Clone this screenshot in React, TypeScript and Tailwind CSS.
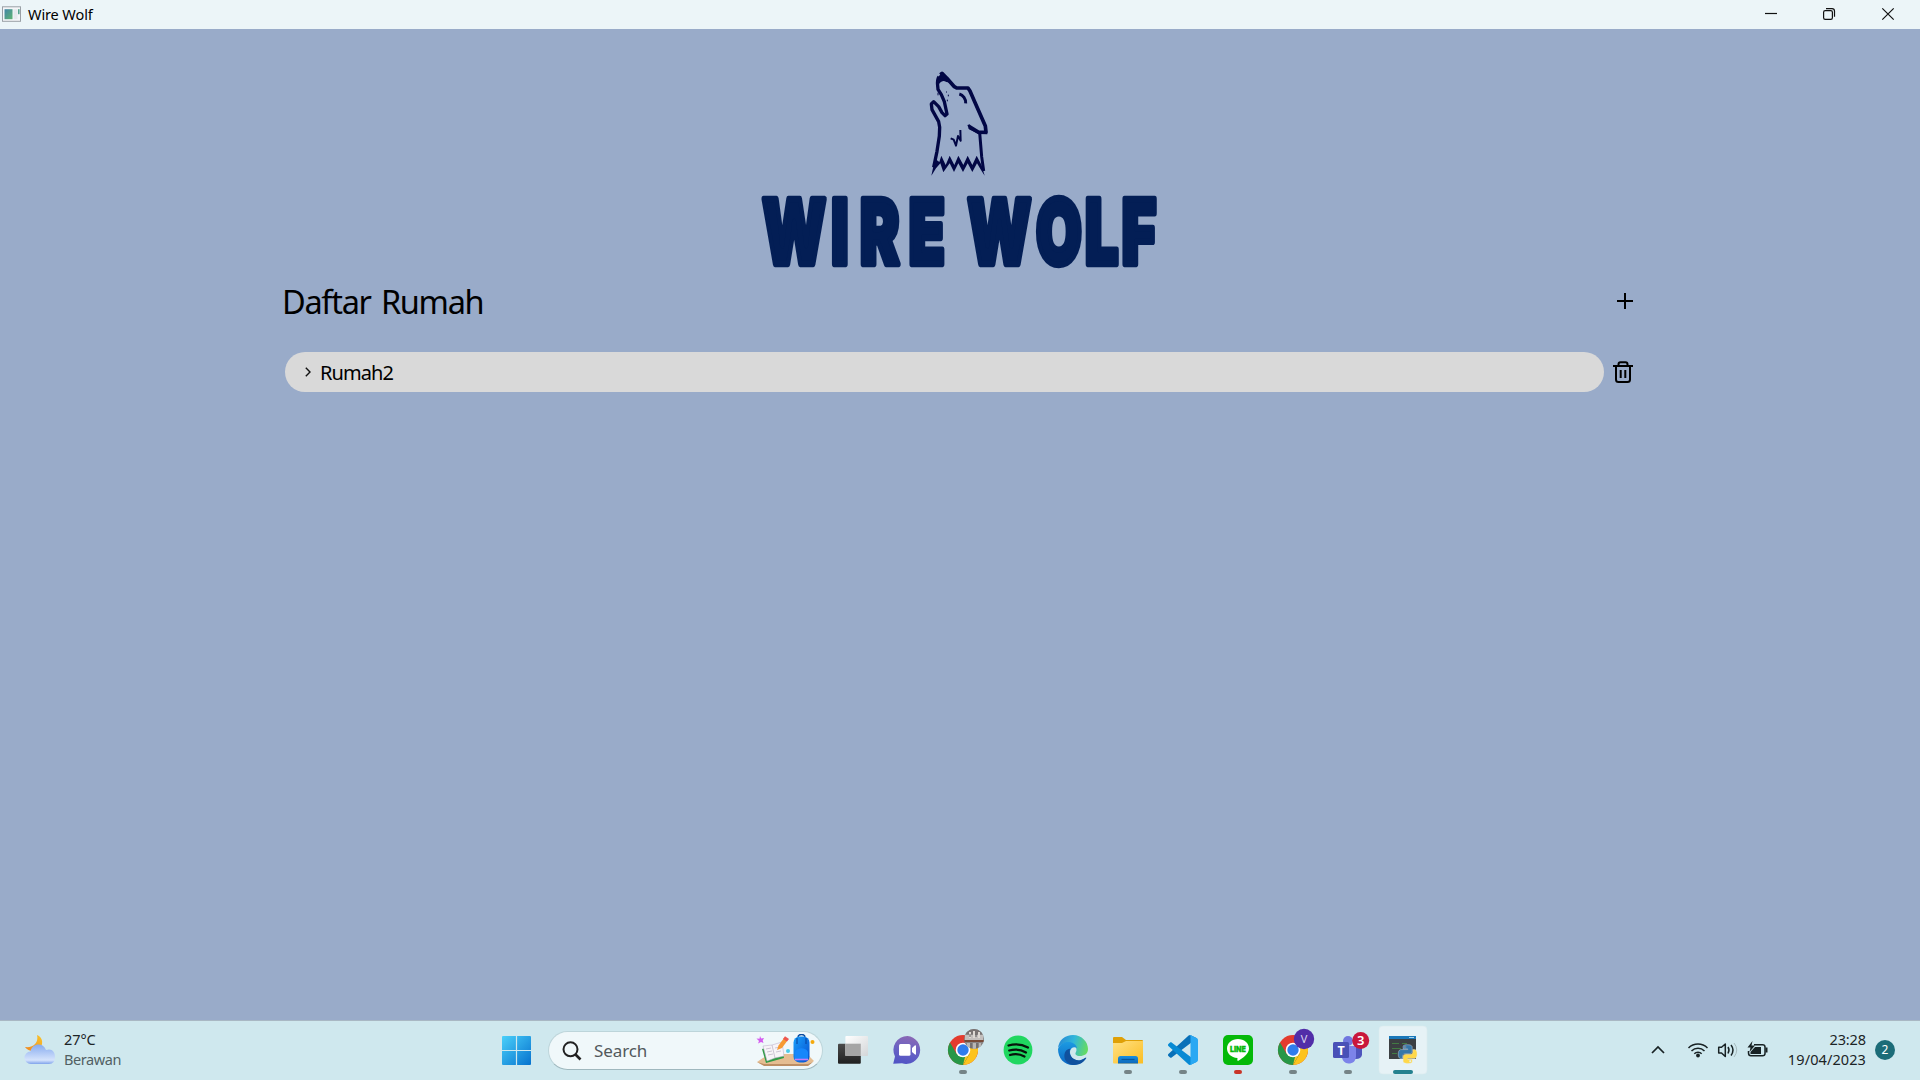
import type { ReactNode } from "react";

const PYTHON_HALF =
  "M14.25.18l.9.2.73.26.59.3.45.32.34.34.25.34.16.33.1.3.04.26.02.2-.01.13V8.5l-.05.63-.13.55-.21.46-.26.38-.3.31-.33.25-.35.19-.35.14-.33.1-.3.07-.26.04-.21.02H8.77l-.69.05-.59.14-.5.22-.41.27-.33.32-.27.35-.2.36-.15.37-.1.35-.07.32-.04.27-.02.21v3.06H3.17l-.21-.03-.28-.07-.32-.12-.35-.18-.36-.26-.36-.36-.35-.46-.32-.59-.28-.73-.21-.88-.14-1.05-.05-1.23.06-1.22.16-1.04.24-.87.32-.71.36-.57.4-.44.42-.33.42-.24.4-.16.36-.1.32-.05.24-.01h.16l.06.01h8.16v-.83H6.18l-.01-2.75-.02-.37.05-.34.11-.31.17-.28.25-.26.31-.23.38-.2.44-.18.51-.15.58-.12.64-.1.71-.06.77-.04.84-.02 1.27.05zm-6.3 1.98l-.23.33-.08.41.08.41.23.34.33.22.41.09.41-.09.33-.22.23-.34.08-.41-.08-.41-.23-.33-.33-.22-.41-.09-.41.09z";

function TitleBar() {
  return (
    <header className="flex h-[29px] shrink-0 items-center justify-between bg-[#ecf5f8]">
      <div className="flex items-center">
        <svg className="ml-[2px] -mt-[2px] h-[16px] w-[19px]" viewBox="0 0 19 16">
          <defs>
            <linearGradient id="app" x1="0" y1="0" x2="1" y2="1">
              <stop offset="0" stopColor="#4286a8" />
              <stop offset="1" stopColor="#5fb471" />
            </linearGradient>
          </defs>
          <rect x=".5" y=".8" width="18" height="14.5" fill="#f4f6f8" stroke="#9aa0a6" />
          <rect x="2.5" y="3.2" width="8" height="10" fill="url(#app)" />
          <rect x="11.5" y="3.2" width="4" height="10" fill="#e6e9ed" />
          <rect x="16" y="3.2" width="1.6" height="5" fill="#58a590" />
        </svg>
        <span className="ml-[7px] text-[14.5px] leading-[29px] tracking-[-0.1px] text-black">Wire Wolf</span>
      </div>
      <svg className="mr-[20px] h-[29px] w-[140px]" viewBox="0 0 140 29" fill="none" stroke="#111" strokeWidth="1.2">
        <path d="M5 13.5H17" />
        <rect x="63.6" y="10.6" width="8.8" height="8.8" rx="1.6" />
        <path d="M66 8.6h6a2.5 2.5 0 0 1 2.5 2.5v5.7" />
        <path d="M122.3 8.3 133.7 19.7M133.7 8.3 122.3 19.7" />
      </svg>
    </header>
  );
}

function Logo() {
  return (
    <div className="flex flex-col items-center pt-[31px]">
      <svg className="h-[130px] w-[120px]" viewBox="0 0 360 390" fill="none" stroke="#020745" strokeLinejoin="round">
        <path d="M121 44 126 40 140 54 163 80 170 84 204 84 210 93 224 125 256 198 258 216 236 217 208 200" strokeWidth="11" />
        <path d="M239 218 245 290 251 333" strokeWidth="9" />
        <path d="M117 50C109 62 113 72 114 88L124 104 133 125 141 162 135 167 126 158 116 140 101 125 94 132 96 149 116 185 119 202 118 228 111 274 101 322" strokeWidth="10" />
        <path d="M125 36 145 56 153 68 139 66C128 58 119 66 114 78L109 68 116 50Z" fill="#020745" stroke="none" />
        <path d="M94 347 105 296 118 306 124 287 137 315 149 287 163 315 175 287 190 315 203 287 217 315 230 287 245 316 254 347 243 330 231 310 217 336 203 310 189 336 175 310 162 336 149 310 130 337 121 310 108 325Z" fill="#020745" stroke="none" />
        <path d="M178 102C189 105 198 116 197 130" strokeWidth="9" />
        <path d="M206 194 210 205 236 218 262 219" strokeWidth="8" />
        <path d="M152 235 161 239 168 257 174 228 182 242 181 210" strokeWidth="6" />
        <path d="M138 96h3M145 104v5M142 119v5M114 98v8" strokeWidth="3" />
      </svg>
      <svg className="-mt-[20px] -mb-[20px] h-[130px] w-[440px]" viewBox="0 -30 1320 390">
        <g
          fill="#031e55"
          stroke="#031e55"
          strokeWidth="19"
          strokeLinejoin="round"
          fontFamily="Inter, sans-serif"
          fontWeight="900"
          fontSize="268"
          transform="scale(.66 1)"
        >
          <text x="101 415 546 767" y="252">WIRE</text>
          <text x="1034 1345 1568 1735" y="252">WOLF</text>
        </g>
      </svg>
    </div>
  );
}

function Cell({ children, mark }: { children: ReactNode; mark?: string }) {
  return (
    <svg className="h-[59px] w-[55px] shrink-0" viewBox="0 0 55 59">
      {children}
      {mark && <rect x="24" y="49" width="8" height="4" rx="2" fill={mark} />}
    </svg>
  );
}

function Chrome() {
  return (
    <g>
      <circle cx="28" cy="29" r="15" fill="#e33b2e" />
      <path d="M15 21.5 21.5 32.7 28 36.5 28 44A15 15 0 0 1 15 21.5Z" fill="#269746" />
      <path d="M28 44 34.5 32.7 34.5 22H41.3A15 15 0 0 1 28 44Z" fill="#fcc31e" />
      <path d="M21.5 32.7 28 44 34.6 32.7Z" fill="#269746" />
      <path d="M28 44 34.6 32.7 30 36Z" fill="#fcc31e" />
      <circle cx="28" cy="29" r="7.3" fill="#fff" />
      <circle cx="28" cy="29" r="5.7" fill="#2f7cec" />
    </g>
  );
}

function Start() {
  return (
    <svg className="h-[59px] w-[58px] shrink-0" viewBox="0 0 58 59">
      <defs>
        <linearGradient id="win" gradientUnits="userSpaceOnUse" x1="12" y1="15" x2="41" y2="44">
          <stop stopColor="#4ad0fa" />
          <stop offset="1" stopColor="#0672ce" />
        </linearGradient>
      </defs>
      <path fill="url(#win)" d="M13 15h12.9v13.9H12V16a1 1 0 0 1 1-1ZM27.1 15H40a1 1 0 0 1 1 1v12.9H27.1ZM12 30.1h13.9V44H13a1 1 0 0 1-1-1ZM27.1 30.1H41V43a1 1 0 0 1-1 1H27.1Z" />
    </svg>
  );
}

function Search() {
  return (
    <div className="flex h-[39px] w-[275px] items-center rounded-full border border-[#bdd5da] border-b-[#9fb8be] bg-[#f0f8fa]">
      <svg className="ml-[12px] h-[22px] w-[22px]" viewBox="0 0 22 22" fill="none" stroke="#222">
        <circle cx="9.5" cy="9.3" r="7" strokeWidth="2" />
        <path d="m14.5 14.5 5 5" strokeWidth="2.6" />
      </svg>
      <span className="ml-[11px] text-[17px] tracking-[-0.1px] text-[#52595c]">Search</span>
      <svg className="ml-auto mr-[6px] h-[33px] w-[61px]" viewBox="0 0 61 33">
        <defs>
          <linearGradient id="bag" x1="0" y1="0" x2="1" y2="1">
            <stop stopColor="#1aa0fb" />
            <stop offset="1" stopColor="#064fd0" />
          </linearGradient>
        </defs>
        <path d="M2 28 14 20H52L59 27 53 31.5H9Z" fill="#e5bd92" />
        <path d="M2 28 9 30H53L58 28 53 32H9Z" fill="#bd8e64" />
        <path d="M7 15 11 29 29 24 26 10Z" fill="#2f9b45" />
        <path d="M8 12 17 11 27 8 29 22 20 24 12 27Z" fill="#f7f4f8" stroke="#b5a8c4" strokeWidth=".5" />
        <path d="M17 11 20 24M11 15l5-1M12 18l5-1M13 21l5-1M20 14l5-1M21 18l5-1" stroke="#b0a6bc" strokeWidth=".6" fill="none" />
        <path d="m22 16 1.5-4.5L29 4l3.5 2.5L27 14Z" fill="#f79a32" />
        <path d="m28 5 2-2.7L34 5l-2 2.6Z" fill="#ee574f" />
        <path d="m5 2 1.2 2.5L9 4 7.7 6.5 8.5 9 6 8 3 9.5 4 7 1.5 4.5 4.5 4.8Z" fill="#d35cf0" />
        <path d="M43 3.5C43-.5 50-.5 50 3.5" fill="none" stroke="#0b4b9f" strokeWidth="1.5" />
        <rect x="38.5" y="2.5" width="16" height="26" rx="6" fill="url(#bag)" />
        <path d="M40 18C42 13 51 13 53 18V25H40Z" fill="#1687fb" />
        <path d="M40 25.5H53" stroke="#c57df8" strokeWidth="1.6" />
        <path d="M42 4v6M51 4v6" stroke="#07419c" strokeWidth="1" />
        <circle cx="33" cy="17" r="2" fill="#4bcbe8" />
        <circle cx="57.5" cy="8" r="2" fill="#f5a90c" />
      </svg>
    </div>
  );
}

function Apps() {
  return (
    <div className="ml-[2px] flex">
      <Cell>
        <defs>
          <linearGradient id="dark" x1="0" y1="0" x2="0" y2="1">
            <stop stopColor="#4a4a4a" />
            <stop offset="1" stopColor="#202020" />
          </linearGradient>
          <linearGradient id="light" x1="0" y1="0" x2="1" y2="1">
            <stop stopColor="#fff" />
            <stop offset="1" stopColor="#d3d6d8" />
          </linearGradient>
        </defs>
        <rect x="13" y="22.7" width="22.8" height="20" rx="1" fill="url(#dark)" />
        <rect x="20.4" y="15" width="22.6" height="20" rx="1" fill="url(#light)" />
        <path d="M20.4 22.7H35.8V35H20.4Z" fill="#a5a5a5" />
      </Cell>
      <Cell>
        <defs>
          <linearGradient id="chat" x1=".6" y1="0" x2=".4" y2="1">
            <stop stopColor="#8b68b4" />
            <stop offset=".5" stopColor="#6962c4" />
            <stop offset="1" stopColor="#5254c5" />
          </linearGradient>
        </defs>
        <path d="M27.5 15A14 14 0 1 1 22 42.3L13.2 42.8 15 35.5A14 14 0 0 1 27.5 15Z" fill="url(#chat)" />
        <rect x="19" y="23" width="11.5" height="11.7" rx="1.5" fill="#fff" />
        <path d="M32 27 35 24.2Q36 24 36 25V33Q36 34 35 33.5L32 31Z" fill="#fff" />
      </Cell>
      <Cell mark="#758487">
        <Chrome />
        <clipPath id="avatar"><circle cx="39" cy="18" r="10" /></clipPath>
        <g clipPath="url(#avatar)">
          <path d="M29 8h20v20H29Z" fill="#898585" />
          <path d="M29 8h20v5H29Z" fill="#797372" />
          <path d="M30 14h18v5H30Z" fill="#c3bfbd" />
          <path d="M34 11h2v6h-2M38 10h2v7h-2M43 11h2v6h-2" fill="#ddd8d3" />
          <path d="M29 19h20v2H29Z" fill="#774b38" />
          <path d="M32 22h3v6h-3M38 22h3v6h-3M44 22h2v5h-2" fill="#b8b7b5" />
          <path d="M35 13v3M41 13v3M36 22v6M42 22v6" stroke="#5d5a5c" />
        </g>
      </Cell>
      <Cell>
        <circle cx="28" cy="29" r="14.4" fill="#20d760" />
        <path d="M18.5 24.5C25 22.5 32 23.2 38 26.5M19.2 29.5C25 27.8 31 28.5 36 31.5M20 34C25 32.5 30 33 34.5 35.5" fill="none" stroke="#07140b" strokeLinecap="round" strokeWidth="2.2" />
      </Cell>
      <Cell>
        <defs>
          <linearGradient id="edgeTop" x1="0" y1=".3" x2="1" y2=".5">
            <stop stopColor="#2689d6" />
            <stop offset=".5" stopColor="#31b6da" />
            <stop offset="1" stopColor="#65db62" />
          </linearGradient>
          <linearGradient id="edgeSide" x1="0" y1="0" x2="0" y2="1">
            <stop stopColor="#1c9ae2" />
            <stop offset="1" stopColor="#0b66c3" />
          </linearGradient>
        </defs>
        <path d="M13 27C14 19 20 14 28 14C37 14 43 21 43 28C43 33 39 35 35 35C31 35 29.5 33 31 31C33 27 29 22 23 22C18 22 15 24 13 27Z" fill="url(#edgeTop)" />
        <path d="M13 28C15 23 19 21 23 21C28 21 31 23.5 32 27C29 25 25 27 25 31C25 36 29 40 35 39.5L41 37C38 42 33 44 28 44C19 44 13 37 13 28Z" fill="url(#edgeSide)" />
        <path d="M25.5 27.5C23 32 26 39 34 39.5C37 39.5 39 37 41 36.5C42 37 40 39 39 40C36 43 32 44 28 44C22 43 18.5 38.5 19.5 33C20 30 22 28 25.5 27.5Z" fill="#10519e" />
      </Cell>
      <Cell mark="#758487">
        <defs>
          <linearGradient id="folder" x1="0" y1="0" x2="1" y2="1">
            <stop stopColor="#ffe184" />
            <stop offset="1" stopColor="#fbbd22" />
          </linearGradient>
          <linearGradient id="tray" x1="0" y1="0" x2="0" y2="1">
            <stop stopColor="#178ee0" />
            <stop offset="1" stopColor="#0c67b9" />
          </linearGradient>
        </defs>
        <path d="M13 17Q13 16 14 16H22L26 19H42Q43 19 43 20V25H13Z" fill="#dfa007" />
        <path d="M13 22H22L26 20H43V42.5H14Q13 42.5 13 41.5Z" fill="url(#folder)" />
        <path d="M18 42.6V37.5Q18 35 20.5 35H35.5Q38 35 38 37.5V42.6Z" fill="url(#tray)" />
        <path d="M21.5 38.5H34.5" stroke="#08569b" strokeWidth="1.2" />
      </Cell>
      <Cell mark="#758487">
        <g transform="translate(13 14) scale(.3)">
          <path fill="#0870b8" d="M96.461 10.796 75.857.876C73.472-.273 70.622.212 68.75 2.083L1.299 63.583C-.516 65.237-.514 68.094 1.303 69.745L6.813 74.754C8.298 76.104 10.535 76.204 12.134 74.991L93.361 13.37C96.086 11.303 100 13.246 100 16.667Z" />
          <path fill="#078ad4" d="M96.461 89.204 75.857 99.125C73.472 100.273 70.622 99.788 68.75 97.917L1.299 36.417C-.516 34.763-.514 31.906 1.303 30.255L6.813 25.246C8.298 23.896 10.535 23.796 12.134 25.01L93.361 86.63C96.086 88.697 100 86.754 100 83.333Z" />
          <path fill="#29a8f3" d="M75.858 99.126C73.472 100.274 70.622 99.789 68.75 97.917C71.056 100.223 75 98.59 75 95.328V4.672C75 1.41 71.056-.223 68.75 2.083C70.622.211 73.472-.274 75.858.874L96.459 10.781C98.623 11.822 100 14.011 100 16.413V83.587C100 85.989 98.623 88.179 96.459 89.22Z" />
        </g>
      </Cell>
      <Cell mark="#c93428">
        <rect x="13" y="14" width="30" height="30" rx="5" fill="#05b909" />
        <path d="M28 18C34 18 39 22 39 27.5C39 33 32 37.5 28 40Q27 40 27.5 37C21 36.5 17 32.5 17 27.5C17 22 22 18 28 18Z" fill="#fff" />
        <text x="20" y="30.5" textLength="16" lengthAdjust="spacingAndGlyphs" fill="#05b909" stroke="#05b909" strokeWidth=".3" fontFamily="Inter, sans-serif" fontSize="7.5" fontWeight="900">LINE</text>
      </Cell>
      <Cell mark="#758487">
        <Chrome />
        <circle cx="39" cy="18" r="10.2" fill="#512da8" />
        <text x="39" y="22" textAnchor="middle" fill="#d8cfed" fontFamily="Roboto, sans-serif" fontSize="11">V</text>
      </Cell>
      <Cell mark="#758487">
        <circle cx="28" cy="20" r="5" fill="#7077df" />
        <circle cx="38" cy="20" r="3.5" fill="#4b52b8" />
        <path d="M32 25H42V34Q41 38 36 38H32Z" fill="#4e55bd" />
        <path d="M22 25H36V35C36 40 33 42.5 28.5 42.5C25 42.5 22 39 22 36Z" fill="#7c83e9" />
        <rect x="13" y="21" width="16" height="16" rx="1.5" fill="#4950b7" />
        <text x="21" y="33.7" textAnchor="middle" fill="#fff" fontFamily="Noto Sans, sans-serif" fontSize="12.5" fontWeight="700">T</text>
        <circle cx="40.7" cy="19.5" r="8.5" fill="#c9173b" />
        <text x="40.7" y="24.3" textAnchor="middle" fill="#fff" fontFamily="Noto Sans, sans-serif" fontSize="13" fontWeight="600">3</text>
      </Cell>
      <Cell>
        <rect x="4" y="5" width="48" height="48" rx="4" fill="#e6f2f6" stroke="#dcebef" strokeWidth=".6" />
        <rect x="14" y="15" width="27" height="23" fill="#3b3f42" />
        <path d="M14 15H41V18H14Z" fill="#1977b9" />
        <path d="M34 16.5h5" stroke="#a6d4ee" />
        <path d="M17 22.5h7M17 27.5h9M17 32.5h5M27 22.5h5" stroke="#427b43" strokeWidth="1.2" />
        <g transform="translate(23.3 23.7) scale(.78)" stroke="#e5eef2" strokeWidth=".5">
          <path d={PYTHON_HALF} fill="#3777a9" />
          <path d={PYTHON_HALF} fill="#ffd849" transform="rotate(180 12 12)" />
        </g>
        <rect x="18" y="49" width="20" height="4" rx="2" fill="#23818f" />
      </Cell>
    </div>
  );
}

function Weather() {
  return (
    <div className="flex w-[490px] items-center pb-[2px]">
      <svg className="ml-[24px] h-[32px] w-[32px]" viewBox="0 0 32 32">
        <defs>
          <linearGradient id="cloud" x1="0" y1="0" x2="0" y2="1">
            <stop stopColor="#86abef" />
            <stop offset=".8" stopColor="#d5e3fc" />
            <stop offset="1" stopColor="#7fa3eb" />
          </linearGradient>
          <linearGradient id="moon" x1="1" y1="0" x2="0" y2="1">
            <stop stopColor="#f9c62a" />
            <stop offset="1" stopColor="#ee8420" />
          </linearGradient>
        </defs>
        <path d="M13 1C19 3 20 11 15 15C10 19 4 17 1 13C9 14 15 9 13 1Z" fill="url(#moon)" />
        <path d="M7 30A6.2 6.2 0 0 1 6.5 17.5C8 9 19 8 22 16C28 14 31 18 31 23Q31 30 25 30Z" fill="url(#cloud)" />
      </svg>
      <div className="ml-[8px] -mt-[2px] flex flex-col text-[14.5px] leading-[20px] tracking-[-0.1px]">
        <span className="text-[#1c2426]">27°C</span>
        <span className="tracking-[-0.4px] text-[#526063]">Berawan</span>
      </div>
    </div>
  );
}

function Tray() {
  return (
    <div className="ml-auto flex items-center pb-[2px]">
      <svg className="h-[30px] w-[130px]" viewBox="0 0 130 30" fill="none" stroke="#182224" strokeWidth="1.5">
        <path d="m12 18 6-6 6 6" strokeWidth="1.7" />
        <path d="M48.5 13A13.5 13.5 0 0 1 67.5 13M51.5 16A9.3 9.3 0 0 1 64.5 16M54.3 18.7A5.2 5.2 0 0 1 61.7 18.7" />
        <circle cx="58" cy="20.5" r="1.9" fill="#182224" stroke="none" />
        <path d="M78.7 12.3h2.8L85.3 9v12.5L81.5 18H78.7Z" strokeLinejoin="round" />
        <path d="M88 12Q90 15 88 18.5M91 10Q95 15 91 20.5" />
        <path d="M94 8Q99.5 15 94 22" stroke="#a7babd" strokeWidth="1" />
        <path d="M114 9.8h8.5Q125 9.8 125 12v6.5Q125 20.8 122.5 20.8H111Q108.5 20.8 108.5 18V16" />
        <path d="M126.5 12.5v5" strokeWidth="2" />
        <path d="M115 12h6v7h-10.5v-2Z" fill="#182224" stroke="none" />
        <path d="M112.5 6 107.5 12.5H110.5L109.5 17 115 10.5H111.5Z" fill="#182224" stroke="none" />
      </svg>
      <div className="ml-[14px] -mt-[2px] flex w-[82px] flex-col items-end text-[14.5px] leading-[20px] text-[#1c2426]">
        <span className="tracking-[-0.1px]">23:28</span>
        <span className="whitespace-nowrap tracking-[0.1px]">19/04/2023</span>
      </div>
      <div className="ml-[9px] mr-[25px] flex h-[20px] w-[20px] items-center justify-center rounded-full bg-[#1c6c78] text-[12px] text-white">2</div>
    </div>
  );
}

export default function App() {
  return (
    <div className="flex h-[1080px] w-[1920px] flex-col overflow-hidden bg-[#99abc9] font-['Noto_Sans',sans-serif]">
      <TitleBar />
      <main className="flex flex-1 flex-col">
        <Logo />
        <section className="ml-[282px] w-[1355px]">
          <div className="flex h-[44px] items-center justify-between">
            <h1 className="text-[32.5px] leading-[44px] tracking-[-1.3px] [word-spacing:3px] text-black">Daftar Rumah</h1>
            <svg className="mr-[4px] -mt-[2px] h-[16px] w-[16px]" viewBox="0 0 16 16" stroke="#000" strokeWidth="2">
              <path d="M8 0V16M0 8H16" />
            </svg>
          </div>
          <div className="ml-[3px] mt-[28px] flex items-center">
            <div className="flex h-[40px] w-[1319px] items-center rounded-full bg-[#d9d9d9]">
              <svg className="ml-[20px] h-[10px] w-[6px]" viewBox="0 0 6 10" fill="none" stroke="#111" strokeWidth="1.4">
                <path d="m.8.8 4.2 4.2-4.2 4.2" />
              </svg>
              <span className="ml-[9px] mt-[1px] text-[20px] leading-[40px] tracking-[-0.9px] text-black">Rumah2</span>
            </div>
            <svg className="ml-[9px] h-[22px] w-[20px]" viewBox="0 0 20 22" fill="none" stroke="#000" strokeWidth="2">
              <path d="M0 5H20M5.5 5V3.5Q5.5 1.2 7.5 1.2H12.5Q14.5 1.2 14.5 3.5V5M3 5V18.5Q3 21 5.5 21H14.5Q17 21 17 18.5V5M7.7 9V17M12.3 9V17" />
            </svg>
          </div>
        </section>
      </main>
      <footer className="flex h-[60px] shrink-0 items-center border-t border-[#a9b8c4] bg-[#cfe8ee]">
        <Weather />
        <Start />
        <Search />
        <Apps />
        <Tray />
      </footer>
    </div>
  );
}
